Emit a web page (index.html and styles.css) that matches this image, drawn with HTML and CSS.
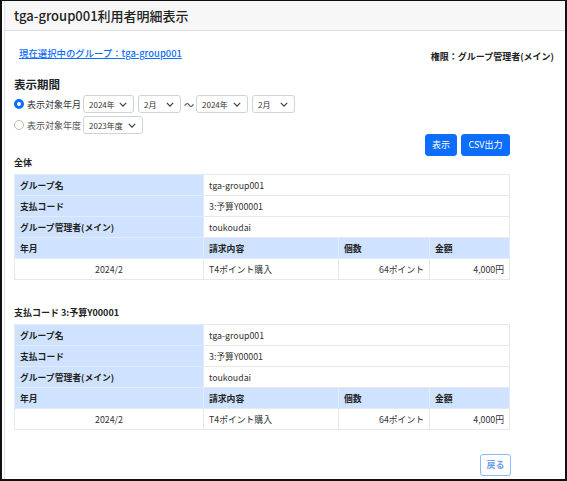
FILE: index.html
```html
<!DOCTYPE html>
<html lang="ja">
<head>
<meta charset="utf-8">
<link rel="stylesheet" href="styles.css">
</head>
<body>
<div class="frame">
  <div class="card">
    <div class="card-header">tga-group001利用者明細表示</div>
    <div class="card-body">
      <div class="info-row">
        <a class="group-link" href="#">現在選択中のグループ：tga-group001</a>
        <span class="role">権限：グループ管理者(メイン)</span>
      </div>
      <div class="period-title">表示期間</div>
      <div class="radio-row">
        <span class="radio checked"></span>
        <span class="radio-label">表示対象年月</span>
        <div class="sel w51">2024年<svg class="chev" viewBox="0 0 10 6"><path d="M1 1l4 4 4-4" fill="none" stroke="#343a40" stroke-width="1.4"/></svg></div>
        <div class="sel w43">2月<svg class="chev" viewBox="0 0 10 6"><path d="M1 1l4 4 4-4" fill="none" stroke="#343a40" stroke-width="1.4"/></svg></div>
        <span class="tilde">～</span>
        <div class="sel w52">2024年<svg class="chev" viewBox="0 0 10 6"><path d="M1 1l4 4 4-4" fill="none" stroke="#343a40" stroke-width="1.4"/></svg></div>
        <div class="sel w43">2月<svg class="chev" viewBox="0 0 10 6"><path d="M1 1l4 4 4-4" fill="none" stroke="#343a40" stroke-width="1.4"/></svg></div>
      </div>
      <div class="radio-row">
        <span class="radio"></span>
        <span class="radio-label gray">表示対象年度</span>
        <div class="sel w60">2023年度<svg class="chev" viewBox="0 0 10 6"><path d="M1 1l4 4 4-4" fill="none" stroke="#343a40" stroke-width="1.4"/></svg></div>
      </div>
      <div class="btn-row">
        <button class="btn primary b32">表示</button>
        <button class="btn primary b49">CSV出力</button>
      </div>
      <div class="section-title">全体</div>
      <table class="detail">
        <colgroup><col class="c1"><col class="c2"><col class="c3"><col class="c4"></colgroup>
        <tr><th>グループ名</th><td colspan="3">tga-group001</td></tr>
        <tr><th>支払コード</th><td colspan="3">3:予算Y00001</td></tr>
        <tr><th>グループ管理者(メイン)</th><td colspan="3">toukoudai</td></tr>
        <tr><th>年月</th><th>請求内容</th><th>個数</th><th>金額</th></tr>
        <tr><td class="center">2024/2</td><td>T4ポイント購入</td><td class="right">64ポイント</td><td class="right">4,000円</td></tr>
      </table>
      <div class="section-title second">支払コード 3:予算Y00001</div>
      <table class="detail">
        <colgroup><col class="c1"><col class="c2"><col class="c3"><col class="c4"></colgroup>
        <tr><th>グループ名</th><td colspan="3">tga-group001</td></tr>
        <tr><th>支払コード</th><td colspan="3">3:予算Y00001</td></tr>
        <tr><th>グループ管理者(メイン)</th><td colspan="3">toukoudai</td></tr>
        <tr><th>年月</th><th>請求内容</th><th>個数</th><th>金額</th></tr>
        <tr><td class="center">2024/2</td><td>T4ポイント購入</td><td class="right">64ポイント</td><td class="right">4,000円</td></tr>
      </table>
      <div class="back-row">
        <button class="btn outline">戻る</button>
      </div>
    </div>
  </div>
</div>
</body>
</html>
```
FILE: styles.css
```css
* { box-sizing: border-box; }
html, body { margin: 0; padding: 0; background: #fff; }
body {
  font-family: "Noto Sans CJK JP", "Noto Sans", sans-serif;
  color: #212529;
  font-size: 9px;
}
.frame {
  width: 567px;
  height: 481px;
  border: 2px solid #111;
  border-top-width: 1px;
  overflow: hidden;
}
.card {
  margin-left: 2px;
  height: 100%;
  border-left: 1px solid #dee2e6;
}
.card-header {
  height: 30px;
  background: #f7f7f7;
  border-bottom: 1px solid #dcdcdc;
  padding-left: 9px;
  font-size: 13px;
  font-weight: 500;
  line-height: 29px;
  color: #222;
}
.card-body {
  padding: 0 11px 0 9px;
}
.info-row {
  display: flex;
  justify-content: space-between;
  margin-top: 15px;
  height: 18px;
}
.group-link {
  margin-left: 5px;
  color: #0d6efd;
  font-weight: 500;
  font-size: 9.4px;
  text-decoration: underline;
  line-height: 14px;
  align-self: flex-start;
}
.role {
  font-weight: 700;
  font-size: 9px;
  line-height: 14px;
  align-self: flex-end;
  color: #222;
}
.period-title {
  margin-top: 12px;
  font-size: 11.5px;
  font-weight: 700;
  line-height: 16px;
}
.radio-row {
  display: flex;
  align-items: center;
  height: 18px;
  margin-top: 3px;
}
.radio {
  width: 10px;
  height: 10px;
  border-radius: 50%;
  border: 1px solid #bbb;
  background: #fff;
  margin-right: 3px;
}
.radio.checked {
  border: 3px solid #0d6efd;
}
.radio-label {
  font-size: 9px;
  width: 56px;
  color: #333;
}
.radio-label.gray { color: #555; }
.sel {
  height: 18px;
  border: 1px solid #ced4da;
  border-radius: 3px;
  font-size: 8px;
  padding-left: 5px;
  display: flex;
  align-items: center;
  position: relative;
  margin-right: 4px;
  color: #333;
}
.w51 { width: 51px; }
.w52 { width: 52px; }
.w43 { width: 43px; }
.w60 { width: 60px; }
.chev {
  position: absolute;
  right: 6px;
  top: 6px;
  width: 8px;
  height: 5px;
}
.tilde {
  font-size: 10px;
  width: 11px;
  margin-right: 1px;
  margin-left: -1px;
  color: #333;
}
.btn-row {
  display: flex;
  gap: 4px;
  margin-left: 411px;
}
.btn {
  font-family: inherit;
  font-size: 9px;
  height: 22px;
  border-radius: 3px;
  padding: 0;
  line-height: 20px;
  cursor: pointer;
  text-align: center;
}
.b32 { width: 32px; }
.b49 { width: 49px; }
.primary {
  background: #0d6efd;
  border: 1px solid #0d6efd;
  color: #fff;
}
.section-title {
  font-size: 9px;
  font-weight: 700;
  line-height: 14px;
  color: #222;
}
.section-title.second { margin-top: 26px; }
.detail {
  border-collapse: collapse;
  width: 495px;
  margin-top: 4px;
  table-layout: fixed;
  font-size: 8.8px;
}
.c1 { width: 189px; }
.c2 { width: 135px; }
.c3 { width: 91px; }
.c4 { width: 80px; }
.detail th, .detail td {
  height: 21px;
  padding: 0 5px;
  border: 1px solid #e6e8ea;
  text-align: left;
  white-space: nowrap;
}
.detail th {
  background: #cfe2ff;
  font-weight: 700;
  color: #222;
  border-color: #e3ebf7;
}
.detail td { color: #333; }
.detail .center { text-align: center; }
.detail .right { text-align: right; }
.back-row {
  margin-top: 24px;
  margin-left: 466px;
}
.outline {
  background: #fff;
  border: 1px solid #8bb9fe;
  color: #6ea0f0;
  font-weight: 700;
  width: 31px;
}
```
